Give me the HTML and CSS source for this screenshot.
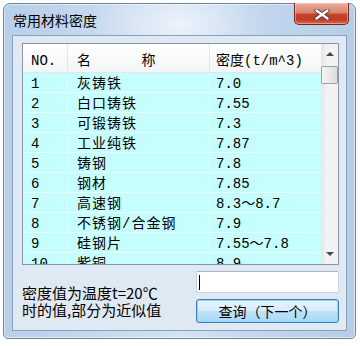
FILE: index.html
```html
<!DOCTYPE html>
<html lang="zh">
<head>
<meta charset="utf-8">
<title>常用材料密度</title>
<link rel="stylesheet" href="styles.css">
</head>
<body>
<div class="window">
  <div class="titlebar">
    <div class="title">常用材料密度</div>
    <div class="close">
      <svg width="16" height="11" viewBox="0 0 16 11">
        <path d="M2.5 1.5 L13.5 9.5 M13.5 1.5 L2.5 9.5" stroke="#4a3a3a" stroke-width="4.2" stroke-linecap="round" fill="none"/>
        <path d="M2.5 1.5 L13.5 9.5 M13.5 1.5 L2.5 9.5" stroke="#ffffff" stroke-width="2.4" stroke-linecap="round" fill="none"/>
      </svg>
    </div>
  </div>
  <div class="client">
    <div class="list">
      <div class="grid">
        <div class="row head"><div class="c1">NO.</div><div class="c2">名&nbsp;&nbsp;&nbsp;&nbsp;&nbsp;&nbsp;称</div><div class="c3">密度(t/m^3)</div></div>
        <div class="row"><div class="c1">1</div><div class="c2">灰铸铁</div><div class="c3">7.0</div></div>
        <div class="row"><div class="c1">2</div><div class="c2">白口铸铁</div><div class="c3">7.55</div></div>
        <div class="row"><div class="c1">3</div><div class="c2">可锻铸铁</div><div class="c3">7.3</div></div>
        <div class="row"><div class="c1">4</div><div class="c2">工业纯铁</div><div class="c3">7.87</div></div>
        <div class="row"><div class="c1">5</div><div class="c2">铸钢</div><div class="c3">7.8</div></div>
        <div class="row"><div class="c1">6</div><div class="c2">钢材</div><div class="c3">7.85</div></div>
        <div class="row"><div class="c1">7</div><div class="c2">高速钢</div><div class="c3">8.3～8.7</div></div>
        <div class="row"><div class="c1">8</div><div class="c2">不锈钢/合金钢</div><div class="c3">7.9</div></div>
        <div class="row"><div class="c1">9</div><div class="c2">硅钢片</div><div class="c3">7.55～7.8</div></div>
        <div class="row"><div class="c1">10</div><div class="c2">紫铜</div><div class="c3">8.9</div></div>
      </div>
      <div class="scrollbar">
        <div class="sbtn"><span class="arrow up"></span></div>
        <div class="thumb"></div>
        <div class="track"></div>
        <div class="sbtn"><span class="arrow down"></span></div>
      </div>
    </div>
    <div class="bottom">
      <div class="note">密度值为温度t=20℃<br>时的值,部分为近似值</div>
      <div class="controls">
        <div class="input"><span class="caret"></span></div>
        <div class="button">查询（下一个）</div>
      </div>
    </div>
  </div>
</div>
</body>
</html>
```

FILE: styles.css
```css
html, body {
  margin: 0;
  padding: 0;
  background: #ffffff;
}
body {
  width: 360px;
  height: 346px;
  overflow: hidden;
  font-family: "Noto Sans CJK SC", sans-serif;
}
.window {
  margin: 3px 0 0 3px;
  width: 353px;
  height: 336px;
  box-sizing: border-box;
  border: 1px solid #6e849c;
  border-radius: 7px 7px 5px 5px;
  background:
    radial-gradient(ellipse 90px 40px at 175px 20px, rgba(255,255,255,0.55), rgba(255,255,255,0) 100%),
    linear-gradient(to right, #b7cfe9 0%, #cbdcf0 35%, #d3e3f4 50%, #c3d7ee 70%, #b6cde7 100%);
  box-shadow: inset 0 0 0 1px rgba(255,255,255,0.55);
  display: flex;
  flex-direction: column;
}
.titlebar {
  height: 31px;
  display: flex;
  align-items: flex-start;
  padding-left: 9px;
}
.title {
  margin-top: 6px;
  font-size: 14px;
  line-height: 20px;
  color: #000;
}
.close {
  margin-left: auto;
  margin-right: 6px;
  margin-top: -1px;
  width: 55px;
  height: 22px;
  box-sizing: border-box;
  border: 1px solid #6b2a20;
  border-top: none;
  border-radius: 0 0 5px 5px;
  background: linear-gradient(to bottom, #e9ab9c 0%, #dc8570 45%, #c8402a 55%, #c23c27 80%, #d8694f 100%);
  box-shadow: inset 0 0 0 1px rgba(255,220,210,0.45);
  display: flex;
  align-items: center;
  justify-content: center;
}
.close svg { display: block; margin-top: 1px; }
.client {
  flex: 1;
  margin: 0 8px 7px 8px;
  border: 1px solid #8aa0b9;
  background: #dfe9f4;
  padding: 7px 7px 7px 9px;
  display: flex;
  flex-direction: column;
}
.list {
  height: 222px;
  box-sizing: border-box;
  border: 1px solid #8b95a3;
  display: flex;
  overflow: hidden;
  background: #c6fefe;
}
.grid {
  flex: 1;
  overflow: hidden;
}
.row {
  display: grid;
  grid-template-columns: 45px 142px 1fr;
  height: 20px;
  box-sizing: border-box;
  border-bottom: 1px solid #e6ffff;
  font-family: "Liberation Mono", "Noto Sans CJK SC", monospace;
  font-size: 14px;
  line-height: 20px;
  color: #000;
}
.row > div {
  padding-left: 8px;
  padding-top: 1px;
  white-space: nowrap;
  overflow: hidden;
}
.row .c1, .row .c2 { border-right: 1px solid #eaffff; }
.row .c2 { padding-left: 9px; letter-spacing: 1px; }
.row .c3 { padding-left: 6px; }
.head {
  height: 29px;
  background: linear-gradient(to bottom, #ffffff, #f4f5f7);
  border-bottom: 1px solid #e3e6ea;
  line-height: 28px;
}
.head > div { padding-top: 3px; }
.head .c1, .head .c2 { border-right: 1px solid #e3e5e8; }
.head .c2, .head .c3 { letter-spacing: 0; }
.scrollbar {
  width: 17px;
  display: flex;
  flex-direction: column;
  background: linear-gradient(to right, #e6e6e6, #f4f4f4 40%, #f1f1f1);
}
.sbtn {
  height: 20px;
  display: flex;
  align-items: center;
  justify-content: center;
}
.arrow {
  width: 0;
  height: 0;
  border-left: 4px solid transparent;
  border-right: 4px solid transparent;
}
.arrow.up { border-bottom: 4px solid #3e4a59; }
.arrow.down { border-top: 4px solid #3e4a59; }
.thumb {
  margin-top: 2px;
  height: 18px;
  box-sizing: border-box;
  border: 1px solid #9aa0a8;
  border-radius: 2px;
  background: linear-gradient(to right, #f6f6f6, #e9e9e9 50%, #dcdcdc);
}
.track { flex: 1; }
.bottom {
  margin-top: 6px;
  display: flex;
}
.note {
  flex: 1;
  padding-top: 13px;
  font-size: 15px;
  line-height: 17px;
  color: #000;
  white-space: nowrap;
}
.controls {
  width: 143px;
  display: flex;
  flex-direction: column;
}
.input {
  height: 22px;
  box-sizing: border-box;
  border: 1px solid #c5d2e0;
  border-top-color: #abb6c4;
  border-radius: 2px;
  background: #ffffff;
  display: flex;
  align-items: center;
  padding-left: 2px;
}
.caret {
  width: 1px;
  height: 15px;
  background: #000;
}
.button {
  margin-top: 6px;
  height: 24px;
  box-sizing: border-box;
  border: 1px solid #3c7fb1;
  border-radius: 3px;
  background: linear-gradient(to bottom, #e6f4fc 0%, #d6ecfb 48%, #bde3fa 52%, #a9d8f6 100%);
  box-shadow: inset 0 0 0 1px #8fd4f7;
  font-size: 14px;
  line-height: 22px;
  text-align: center;
  color: #000;
}
```
